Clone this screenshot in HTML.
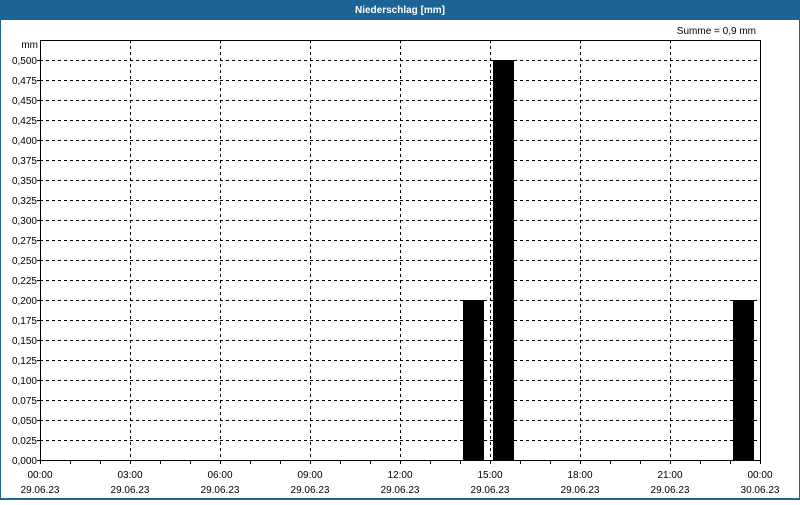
<!DOCTYPE html>
<html><head><meta charset="utf-8"><style>
body{margin:0;width:800px;height:500px;overflow:hidden;background:#fff}
svg text{font-family:"Liberation Sans","DejaVu Sans",sans-serif;font-size:10px;fill:#000}
</style></head><body>
<svg width="800" height="500" xmlns="http://www.w3.org/2000/svg">
<rect x="0" y="0" width="800" height="500" fill="#1c6396"/>
<rect x="1" y="20" width="798" height="478" fill="#fff"/>
<text x="400" y="13" text-anchor="middle" style="fill:#fff;font-weight:bold;font-size:10px">Niederschlag [mm]</text>
<text x="756" y="34" text-anchor="end">Summe = 0,9 mm</text>
<text x="38" y="48" text-anchor="end">mm</text>
<g stroke="#000" stroke-width="1" stroke-dasharray="3,3" fill="none" id="grid"></g>
<g id="bars" fill="#000">
<rect x="463" y="300" width="21" height="160"/>
<rect x="493" y="60" width="21" height="400"/>
<rect x="733" y="300" width="21" height="160"/>
</g>
<rect x="40.5" y="40.5" width="720" height="420" fill="none" stroke="#000"/>
<g id="labels"></g>
</svg>
<script>
var ns="http://www.w3.org/2000/svg",g=document.getElementById('grid'),l=document.getElementById('labels');
function ln(p,x1,y1,x2,y2,d){var e=document.createElementNS(ns,'line');e.setAttribute('x1',x1);e.setAttribute('y1',y1);e.setAttribute('x2',x2);e.setAttribute('y2',y2);if(!d){e.setAttribute('stroke','#000');}p.appendChild(e);}
function tx(x,y,s,a){var e=document.createElementNS(ns,'text');e.setAttribute('x',x);e.setAttribute('y',y);e.setAttribute('text-anchor',a);e.textContent=s;l.appendChild(e);}
for(var i=0;i<=20;i++){var y=460-i*20;if(i>0&&i<21)ln(g,40,y+.5,760,y+.5,1);tx(37,y+4,(i*0.025).toFixed(3).replace('.',','),'end');ln(l,37,y+.5,40,y+.5);}
var t=['00:00','03:00','06:00','09:00','12:00','15:00','18:00','21:00','00:00'];
for(var j=0;j<=8;j++){var x=40+j*90;if(j>0&&j<8)ln(g,x+.5,40,x+.5,460,1);tx(x,478,t[j],'middle');tx(x,493,j==8?'30.06.23':'29.06.23','middle');}
for(var k=0;k<=24;k++){var x=40+k*30;ln(l,x+.5,460,x+.5,464);}
</script>
</body></html>
